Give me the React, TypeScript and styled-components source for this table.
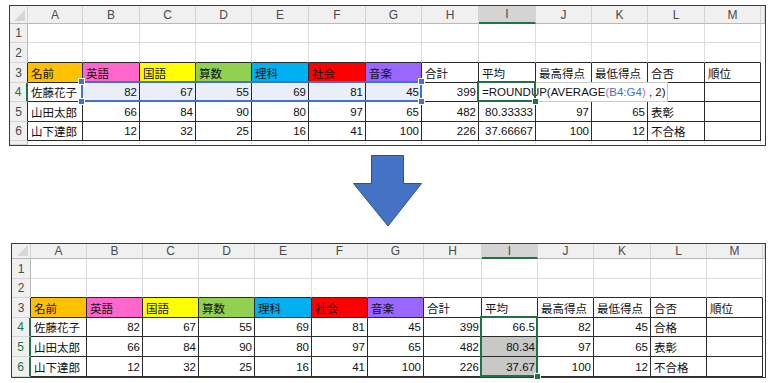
import React from "react";
import styled, { createGlobalStyle } from "styled-components";

const GlobalStyle = createGlobalStyle`
  body {
    margin: 0;
    background: #fff;
    font-family: "Liberation Sans", "Noto Sans CJK JP", sans-serif;
  }
`;

const Page = styled.div`
  width: 769px;
  height: 383px;
  display: flex;
  flex-direction: column;
  overflow: hidden;
`;

const SheetGrid = styled.div<{ $cols: string; $rows: string; $left: number; $top: number }>`
  display: grid;
  grid-template-columns: ${(p) => p.$cols};
  grid-template-rows: ${(p) => p.$rows};
  margin: ${(p) => p.$top}px 0 0 ${(p) => p.$left}px;
  width: fit-content;
  border: 1px solid #3c3c3c;
  background: #fff;
`;

type Pos = { $r: number; $c: number };

const Corner = styled.div`
  grid-row: 1;
  grid-column: 1;
  box-sizing: border-box;
  background: #f0f0f0;
  border-right: 1px solid #d4d4d4;
  border-bottom: 1px solid #b8b8b8;
  position: relative;
  &::after {
    content: "";
    position: absolute;
    right: 2px;
    bottom: 2px;
    width: 0;
    height: 0;
    border-left: 11px solid transparent;
    border-bottom: 11px solid #d6d6d6;
  }
`;

const ColHead = styled.div<Pos & { $active?: boolean }>`
  grid-row: ${(p) => p.$r};
  grid-column: ${(p) => p.$c};
  box-sizing: border-box;
  background: ${(p) => (p.$active ? "#d4d4d4" : "#f0f0f0")};
  border-right: 1px solid #d4d4d4;
  border-bottom: ${(p) => (p.$active ? "2px solid #217346" : "1px solid #b8b8b8")};
  color: #4a4a4a;
  font-size: 12px;
  display: flex;
  align-items: center;
  justify-content: center;
`;

const RowHead = styled.div<Pos & { $active?: boolean; $dark?: boolean }>`
  grid-row: ${(p) => p.$r};
  grid-column: ${(p) => p.$c};
  box-sizing: border-box;
  background: #f0f0f0;
  border-right: ${(p) =>
    p.$active ? "2px solid #217346" : p.$dark ? "1px solid #2a2a2a" : "1px solid #b8b8b8"};
  border-bottom: 1px solid #d4d4d4;
  color: ${(p) => (p.$active ? "#217346" : "#4a4a4a")};
  font-size: 12px;
  display: flex;
  align-items: center;
  justify-content: center;
`;

const Cell = styled.div<Pos & { $bg?: string; $num?: boolean; $rb: string; $bb: string }>`
  grid-row: ${(p) => p.$r};
  grid-column: ${(p) => p.$c};
  box-sizing: border-box;
  background: ${(p) => p.$bg ?? "#fff"};
  border-right: 1px solid ${(p) => p.$rb};
  border-bottom: 1px solid ${(p) => p.$bb};
  display: flex;
  align-items: center;
  justify-content: ${(p) => (p.$num ? "flex-end" : "flex-start")};
  padding: ${(p) => (p.$num ? "0 2px 0 0" : "0 0 0 3px")};
  font-size: 11.5px;
  color: #111;
  white-space: nowrap;
  overflow: hidden;
`;

const Selection = styled.div<{ $col: string; $row: string; $color: string }>`
  grid-column: ${(p) => p.$col};
  grid-row: ${(p) => p.$row};
  margin: -2px 0 0 -2px;
  border: 2px solid ${(p) => p.$color};
  position: relative;
  pointer-events: none;
  z-index: 3;
`;

const Handle = styled.span<{ $color: string; $x: "left" | "right"; $y: "top" | "bottom" }>`
  position: absolute;
  width: 5px;
  height: 5px;
  background: ${(p) => p.$color};
  border: 1px solid #fff;
  ${(p) => p.$x}: -5px;
  ${(p) => p.$y}: -5px;
`;

const EditBox = styled.div`
  grid-column: 10 / 13;
  grid-row: 5;
  margin: -1px -20px 0 -1px;
  background: #fff;
  border: 1px solid #c9c9c9;
  z-index: 2;
  display: flex;
  align-items: center;
  padding-left: 3px;
  font-size: 11.5px;
  color: #111;
  white-space: nowrap;
`;

const Ref = styled.span<{ $c: string }>`
  color: ${(p) => p.$c};
`;

const ArrowWrap = styled.div`
  margin: 9px 0 0 353px;
  height: 72px;
`;

const COLS = ["A", "B", "C", "D", "E", "F", "G", "H", "I", "J", "K", "L", "M"];
const HEAD = ["名前", "英語", "国語", "算数", "理科", "社会", "音楽", "合計", "平均", "最高得点", "最低得点", "合否", "順位"];
const HEAD_BG = ["#FFC000", "#FF66CC", "#FFFF00", "#92D050", "#00B0F0", "#FF0000", "#9966FF"];
const EMPTY = COLS.map(() => "");

const DARK = "#2a2a2a";
const LIGHT = "#dcdcdc";

interface SheetProps {
  colWidths: number[];
  rowHeights: number[];
  left: number;
  top: number;
  body: string[][];
  activeRows: number[];
  activeCol: number;
  fills?: Record<string, string>;
  children?: React.ReactNode;
}

const Sheet: React.FC<SheetProps> = ({ colWidths, rowHeights, left, top, body, activeRows, activeCol, fills = {}, children }) => {
  const rows = [EMPTY, EMPTY, HEAD, ...body];
  const extra = rowHeights.length > 7;
  return (
    <SheetGrid
      $cols={colWidths.map((w) => `${w}px`).join(" ")}
      $rows={rowHeights.map((h) => `${h}px`).join(" ")}
      $left={left}
      $top={top}
    >
      <Corner />
      {COLS.map((c, i) => (
        <ColHead key={c} $r={1} $c={i + 2} $active={i === activeCol}>{c}</ColHead>
      ))}
      <ColHead $r={1} $c={15} />
      {rows.map((r, ri) => {
        const rowNo = ri + 1;
        const inTable = rowNo >= 3;
        return (
          <React.Fragment key={rowNo}>
            <RowHead $r={rowNo + 1} $c={1} $active={activeRows.includes(rowNo)} $dark={inTable}>
              {rowNo}
            </RowHead>
            {r.map((v, ci) => {
              const num = /^[\d.]+$/.test(v);
              const bg = fills[`${rowNo},${ci}`] ?? (rowNo === 3 && ci < 7 ? HEAD_BG[ci] : undefined);
              return (
                <Cell
                  key={ci}
                  $r={rowNo + 1}
                  $c={ci + 2}
                  $bg={bg}
                  $num={num}
                  $rb={inTable ? DARK : LIGHT}
                  $bb={rowNo >= 2 ? DARK : LIGHT}
                >
                  {v}
                </Cell>
              );
            })}
          </React.Fragment>
        );
      })}
      {extra && (
        <>
          <RowHead $r={8} $c={1} />
          {COLS.map((c, ci) => (
            <Cell key={c} $r={8} $c={ci + 2} $rb={LIGHT} $bb="#fff" />
          ))}
        </>
      )}
      {children}
    </SheetGrid>
  );
};

const DownArrow: React.FC = () => (
  <ArrowWrap>
    <svg width="70" height="72" viewBox="0 0 70 72">
      <polygon
        points="18.5,0.5 50.5,0.5 50.5,28.5 68.5,28.5 35,71 0.5,28.5 18.5,28.5"
        fill="#4472C4"
        stroke="#2F528F"
        strokeWidth="1"
      />
    </svg>
  </ArrowWrap>
);

const BLUE = "#4472C4";
const GREEN = "#217346";

const topBody = [
  ["佐藤花子", "82", "67", "55", "69", "81", "45", "399", "", "", "", "", ""],
  ["山田太郎", "66", "84", "90", "80", "97", "65", "482", "80.33333", "97", "65", "表彰", ""],
  ["山下達郎", "12", "32", "25", "16", "41", "100", "226", "37.66667", "100", "12", "不合格", ""],
];

const bottomBody = [
  ["佐藤花子", "82", "67", "55", "69", "81", "45", "399", "66.5", "82", "45", "合格", ""],
  ["山田太郎", "66", "84", "90", "80", "97", "65", "482", "80.34", "97", "65", "表彰", ""],
  ["山下達郎", "12", "32", "25", "16", "41", "100", "226", "37.67", "100", "12", "不合格", ""],
];

const topFills: Record<string, string> = {
  "4,1": "#e9eef8",
  "4,2": "#e9eef8",
  "4,3": "#e9eef8",
  "4,4": "#e9eef8",
  "4,5": "#e9eef8",
  "4,6": "#e9eef8",
};

const bottomFills: Record<string, string> = {
  "5,8": "#c8c8c8",
  "6,8": "#c8c8c8",
};

const App: React.FC = () => (
  <Page>
    <GlobalStyle />
    <Sheet
      colWidths={[18, 55, 57, 56, 56, 57, 57, 56, 57, 57, 56, 56, 57, 56, 4]}
      rowHeights={[18, 19, 20, 20, 19, 20, 19, 4]}
      left={9}
      top={5}
      body={topBody}
      activeRows={[4]}
      activeCol={8}
      fills={topFills}
    >
      <Selection $col="3 / 9" $row="5" $color={BLUE}>
        <Handle $color={BLUE} $x="left" $y="top" />
        <Handle $color={BLUE} $x="left" $y="bottom" />
        <Handle $color={BLUE} $x="right" $y="top" />
        <Handle $color={BLUE} $x="right" $y="bottom" />
      </Selection>
      <EditBox>
        =ROUNDUP(AVERAGE<Ref $c="#e0609a">(</Ref>
        <Ref $c="#3d6fd6">B4:G4</Ref>
        <Ref $c="#e0609a">)</Ref>&nbsp;, 2)
      </EditBox>
      <Selection $col="10" $row="5" $color={GREEN}>
        <Handle $color={GREEN} $x="right" $y="bottom" />
      </Selection>
    </Sheet>
    <DownArrow />
    <Sheet
      colWidths={[19, 56, 56, 56, 56, 57, 56, 56, 58, 56, 56, 57, 56, 56, 2]}
      rowHeights={[15, 20, 19, 20, 19, 20, 20]}
      left={11}
      top={16}
      body={bottomBody}
      activeRows={[4, 5, 6]}
      activeCol={8}
      fills={bottomFills}
    >
      <Selection $col="10" $row="5 / 8" $color={GREEN}>
        <Handle $color={GREEN} $x="right" $y="bottom" />
      </Selection>
    </Sheet>
  </Page>
);

export default App;
